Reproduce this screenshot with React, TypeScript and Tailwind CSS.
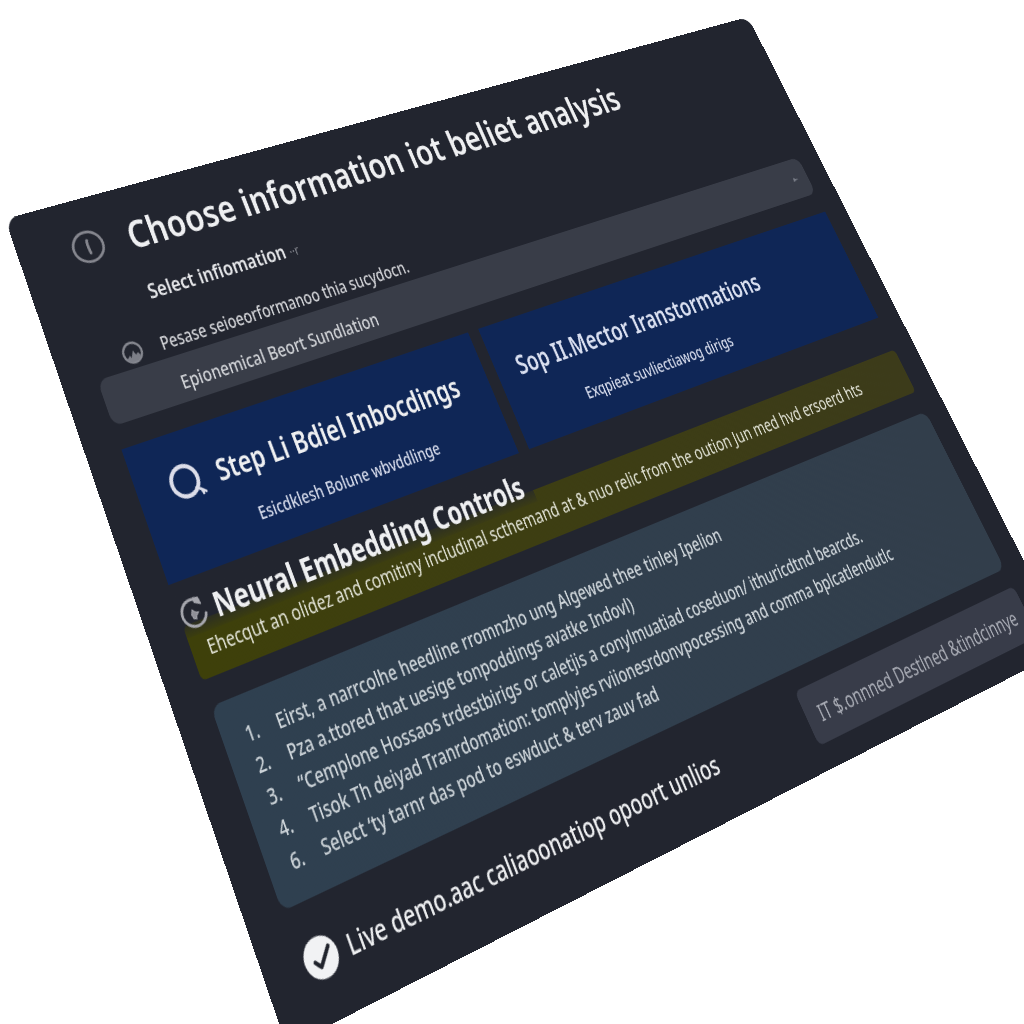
import { useLayoutEffect, useRef, useState } from "react";

type Point = [number, number];

// Corners of the tilted board, as fractions of the window width:
// top left, top right, bottom right, bottom left.
const CORNERS: Point[] = [
  [5, 219],
  [748, 17],
  [1068, 648],
  [287, 1047],
].map(([x, y]) => [x / 1024, y / 1024] as Point);

// Perspective matrix that carries a w × h box onto four corners.
function perspective(w: number, h: number, corners: Point[]): string {
  const [[x0, y0], [x1, y1], [x2, y2], [x3, y3]] = corners;
  const dx1 = x1 - x2;
  const dx2 = x3 - x2;
  const sx = x0 - x1 + x2 - x3;
  const dy1 = y1 - y2;
  const dy2 = y3 - y2;
  const sy = y0 - y1 + y2 - y3;
  const den = dx1 * dy2 - dx2 * dy1;
  const g = (sx * dy2 - dx2 * sy) / den;
  const k = (dx1 * sy - sx * dy1) / den;
  const m = [
    (x1 - x0 + g * x1) / w, (y1 - y0 + g * y1) / w, 0, g / w,
    (x3 - x0 + k * x3) / h, (y3 - y0 + k * y3) / h, 0, k / h,
    0, 0, 1, 0,
    x0, y0, 0, 1,
  ];
  return `matrix3d(${m.join(",")})`;
}

function useTilt() {
  const ref = useRef<HTMLDivElement>(null);
  const [transform, setTransform] = useState("none");
  useLayoutEffect(() => {
    const update = () => {
      const el = ref.current;
      if (!el) return;
      const s = window.innerWidth;
      setTransform(
        perspective(el.offsetWidth, el.offsetHeight, CORNERS.map(([x, y]) => [x * s, y * s] as Point)),
      );
    };
    update();
    window.addEventListener("resize", update);
    return () => window.removeEventListener("resize", update);
  }, []);
  return { ref, transform };
}

const InfoIcon = () => (
  <svg viewBox="0 0 36 36" preserveAspectRatio="none" className="h-9 w-11 shrink-0" fill="none" aria-hidden="true">
    <circle cx="18" cy="18" r="16" stroke="#85868e" strokeWidth="2.8" />
    <path d="M18.500 11c-1.500 3-.5 10 0 14" stroke="#85868e" strokeWidth="3" strokeLinecap="round" />
  </svg>
);

const HelpIcon = () => (
  <svg viewBox="0 0 24 24" preserveAspectRatio="none" className="h-6 w-7 shrink-0" fill="none" aria-hidden="true">
    <circle cx="12" cy="12" r="10.2" stroke="#85878f" strokeWidth="2.4" />
    <path d="M4 18l4-4 1 3 4-7 2 5 3-2 2 5-5 3-7 .5z" fill="#7d7f88" />
  </svg>
);

const SearchIcon = () => (
  <svg viewBox="0 0 40 34" preserveAspectRatio="none" className="h-9 w-12 shrink-0" fill="none" stroke="#dcdde9" aria-hidden="true">
    <circle cx="18" cy="16" r="14" strokeWidth="4" />
    <path d="M27 25l5 3 1 4M31 27l5 4" strokeWidth="2.4" strokeLinecap="round" />
  </svg>
);

const RefreshIcon = () => (
  <svg viewBox="0 0 32 32" preserveAspectRatio="none" className="h-8 w-9 shrink-0" fill="none" stroke="#a6a7ae" aria-hidden="true">
    <path d="M21 4.500A13 12.500 0 1 0 28.500 20" strokeWidth="2.8" strokeLinecap="round" />
    <path d="M20 3l5 1 1 6-6-3z" strokeWidth="1.500" strokeLinejoin="round" fill="#a6a7ae" />
    <path d="M15 13l3 3 3 1-3 2-1 3-3-1-1-4z" strokeWidth="1" fill="#8e8f97" />
  </svg>
);

const CheckIcon = () => (
  <svg viewBox="0 0 40 40" preserveAspectRatio="none" className="h-9 w-[42px] shrink-0" fill="none" aria-hidden="true">
    <circle cx="20" cy="20" r="19.500" fill="#f1f2f4" />
    <path d="M12 22l5 6 14-15" stroke="#20232c" strokeWidth="4" strokeLinecap="round" strokeLinejoin="round" />
  </svg>
);

const STEPS = [
  { n: "1.", text: "Eirst, a narrcolhe heedline rromnzho ung Algewed thee tinley Ipelion" },
  { n: "2.", text: "Pza a.ttored that uesige tonpoddings avatke Indovl)" },
  { n: "3.", text: "“Cemplone Hossaos trdestbirigs or caletjis a conylmuatiad coseduon/ ithuricdtnd bearcds." },
  { n: "4.", text: "Tisok Th deiyad Tranrdomation: tomplyjes rviionesrdonvpocessing and comma bplcatlendutlc" },
  { n: "6.", text: "Select ‘ty tarnr das pod to eswduct & terv zauv fad" },
];

export default function App() {
  const { ref, transform } = useTilt();
  return (
    <main className="h-screen w-full overflow-hidden bg-white font-['Noto_Sans',sans-serif]">
      <div
        ref={ref}
        style={{ transform }}
        className="w-[1200px] origin-top-left rounded-2xl bg-[#22252f] pt-7 pr-9 pb-6 pl-11 text-[#eeeff1]"
      >
        <header className="flex items-center gap-8 pl-6">
          <InfoIcon />
          <h1 className="text-[42px] leading-12 font-semibold">Choose information iot beliet analysis</h1>
        </header>

        <section>
          <label htmlFor="source" className="mt-6 block pl-25 text-[22px] leading-7 font-semibold text-[#e4e5e8]">
            Select infiomation <span className="text-sm font-normal text-[#8b8d95]">··r</span>
          </label>
          <p className="mt-7 flex items-center gap-6 pl-10 text-[19px] leading-7 font-medium text-[#cfd0d4]">
            <HelpIcon />
            Pesase seioeorformanoo thia sucydocn.
          </p>
          <div className="mt-0.5 flex items-center rounded-xl bg-[#393d48] pr-4">
            <select
              id="source"
              className="h-12 min-w-0 grow appearance-none bg-transparent pt-2 pl-25 text-xl leading-7 font-medium text-[#cfd1d5]"
            >
              <option>Epionemical Beort Sundlation</option>
            </select>
            <svg viewBox="0 0 12 8" className="h-2 w-3 shrink-0" aria-hidden="true">
              <path d="M1 7l2-5 3 2 5 1-5 1z" fill="#777b85" />
            </svg>
          </div>
        </section>

        <section className="mt-6 grid grid-cols-[45fr_55fr] gap-4">
          <button type="button" className="flex gap-4 bg-[#0f2656] pt-8 pb-5 pl-10 text-left">
            <SearchIcon />
            <span>
              <span className="block text-[30px] leading-9 font-semibold">Step Li Bdiel Inbocdings</span>
              <span className="mt-5 block pl-8 text-lg leading-7 font-medium text-[#d5daea]">Esicdklesh Bolune wbvddlinge</span>
            </span>
          </button>
          <button type="button" className="bg-[#0f2656] pt-8 pb-5 pl-8 text-left">
            <span className="block text-[28px] leading-9 font-semibold text-[#d9dff0]">Sop II.Mector Iranstormations</span>
            <span className="mt-5 block pl-20 text-lg leading-7 font-medium text-[#d5daea]">Exqpieat suvliectiawog dirigs</span>
          </button>
        </section>

        <section>
          <div className="relative mt-3 flex w-fit items-center gap-2 bg-linear-to-b from-[#22252f] from-50% to-[#22252f]/10 pr-3">
            <RefreshIcon />
            <h2 className="text-[32px] leading-10 font-bold">Neural Embedding Controls</h2>
          </div>
          <p className="-mt-3 rounded-md bg-linear-to-r from-[#3e400a] to-[#3c3b1a] py-3 pl-5 text-xl leading-7 text-[#e2e3d6]">
            Ehecqut an olidez and comitiny includinal scthemand at &amp; nuo relic from the oution Jun med hvd ersoerd hts
          </p>
        </section>

        <ol className="mt-6 rounded-xl bg-linear-to-r from-[#2f4050] to-[#323e4b] pt-5 pb-5 pl-7 text-xl leading-[29px] font-medium text-[#ccd3d8]">
          {STEPS.map((step) => (
            <li key={step.n} className="flex">
              <span className="w-10 shrink-0">{step.n}</span>
              <span className="whitespace-nowrap">{step.text}</span>
            </li>
          ))}
        </ol>

        <footer className="mt-5 flex items-center justify-between">
          <p className="flex items-center gap-3 pl-1 text-[26px] leading-9 font-medium">
            <CheckIcon />
            Live demo.aac caliaoonatiop opoort unlios
          </p>
          <button type="button" className="h-14 rounded-lg bg-[#383c49] px-5 text-[22px] text-[#a9acb5]">
            IT $.onnned Destlned &amp;tindcinnye
          </button>
        </footer>
      </div>
    </main>
  );
}
